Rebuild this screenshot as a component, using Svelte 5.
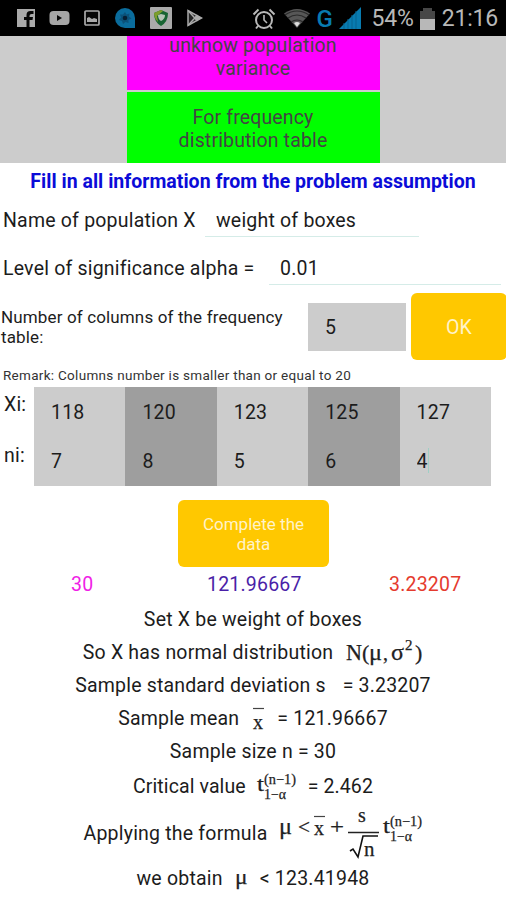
<script>
  let population = $state('weight of boxes');
  let alpha = $state('0.01');
  let columnCount = $state('5');

  let table = $state([
    { x: '118', n: '7' },
    { x: '120', n: '8' },
    { x: '123', n: '5' },
    { x: '125', n: '6' },
    { x: '127', n: '4' }
  ]);
</script>

{#snippet critical(x, y)}
  <text x={x} y={y} class="sym" textLength="7" lengthAdjust="spacingAndGlyphs" font-size="22">t</text>
  <text x={x + 7} y={y - 7} class="sym" textLength="32" lengthAdjust="spacingAndGlyphs" font-size="14.500">(n−1)</text>
  <text x={x + 7} y={y + 8} class="sym" textLength="22" lengthAdjust="spacingAndGlyphs" font-size="14">1−α</text>
{/snippet}

<div class="screen">
  <header class="status">
    <div class="notifications">
      <svg width="18" height="18" viewBox="0 0 18 18">
        <rect width="18" height="18" fill="#aaa" />
        <path d="M9.500 18v-7H7V8h2.500V6q0-4 4-4h3v3h-2q-2 0-2 2v1h3.500l-.5 3h-3v7z" fill="#080808" />
      </svg>
      <svg width="21" height="16" viewBox="0 0 21 16">
        <rect x=".5" y="1" width="20" height="14" rx="4" fill="#a6a6a6" />
        <path d="M8 5v6l5-3z" fill="#080808" />
      </svg>
      <svg width="16" height="16" viewBox="0 0 16 16">
        <rect x="1" y="1" width="14" height="14" rx="1" fill="#080808" stroke="#aaa" stroke-width="1.700" />
        <path d="M3 12V8l2-1 3 2 2-1 3 1v3z" fill="#aaa" />
      </svg>
      <svg width="22" height="22" viewBox="0 0 22 22">
        <path d="M11 1a10 10 0 1 0 0 20h10V11A10 10 0 0 0 11 1z" fill="#0a6c9c" />
        <path d="M11 5l1.500 2.500 3-1-.5 3 2.500 2-3 1.500v3l-3-1-2.500 2-1-3-3-1 2-2.500L6 7.500l3 .1z" fill="#0b527a" />
        <circle cx="11" cy="11" r="2.300" fill="#062035" />
      </svg>
      <svg width="22" height="22" viewBox="0 0 22 22">
        <rect width="22" height="22" rx="1" fill="#aaa" />
        <path d="M4 6l7-3 7 3q0 9-7 13Q4 15 4 6z" fill="#176432" />
        <path d="M4 6l7-3 2 1-6 5 1 6Q4 11 4 6z" fill="#7d9d2b" />
        <path d="M8 8l3-1 4 1q0 4-4 6-3-2-3-6z" fill="#b5c3b5" />
      </svg>
      <svg width="18" height="20" viewBox="0 0 18 20">
        <path d="M2 2.500v15L15.500 10z" fill="#242424" stroke="#aaa" stroke-width="1.500" />
        <path d="M2 2.500L11.500 13M2 17.500L11.500 7" fill="none" stroke="#aaa" stroke-width="1.500" />
        <path d="M11 7l5 3-5 3-3-3z" fill="#aaa" />
      </svg>
    </div>
    <div class="system">
      <svg width="24" height="22" viewBox="0 0 24 22" fill="none" stroke="#b8b8b8">
        <circle cx="12" cy="12" r="8" stroke-width="2" />
        <path d="M12 7v5l3 3" stroke-width="1.600" />
        <path d="M1.500 6.500l5-5M17.500 1.500l5 5M6 18l-2 2.500M18 18l2 2.500" stroke-width="2" />
      </svg>
      <svg class="wifi" width="28" height="21" viewBox="0 0 28 21">
        <path d="M1 5.500Q14-3.500 27 5.500L14 20z" fill="#575757" />
        <path d="M2 7q12-8 24 0M5 10q9-6 18 0M8 14q6-4 12 0" fill="none" stroke="#2a2a2a" stroke-width="1.200" />
        <path d="M11 15q3-2 6 0l-3 4z" fill="#ddd" />
      </svg>
      <span class="network">G</span>
      <svg width="24" height="23" viewBox="0 0 24 23">
        <path d="M1 22L23 0v22z" fill="#087bb0" />
        <path d="M6 16v6M10 12v10M14 8v14M18 4v18" stroke="#066490" stroke-width="1" />
      </svg>
      <span class="percent">54%</span>
      <svg class="battery" width="15" height="22" viewBox="0 0 15 22">
        <path d="M0 3h3V0h9v3h3v9H0z" fill="#474747" />
        <path d="M0 11h15v11H0z" fill="#b8b8b8" />
      </svg>
      <span class="clock">21:16</span>
    </div>
  </header>

  <nav class="modes">
    <button type="button" class="mode variance">unknow population<br />variance</button>
    <button type="button" class="mode frequency">For frequency<br />distribution table</button>
  </nav>

  <h1>Fill in all information from the problem assumption</h1>

  <label class="field name">
    <span>Name of population X</span>
    <input bind:value={population} />
  </label>
  <label class="field alpha">
    <span>Level of significance alpha =</span>
    <input bind:value={alpha} />
  </label>

  <div class="columns">
    <span class="columns-label">Number of columns of the frequency table:</span>
    <input bind:value={columnCount} />
    <button type="button" class="ok">OK</button>
  </div>

  <p class="remark">Remark: Columns number is smaller than or equal to 20</p>

  <div class="data">
    <div class="data-labels">
      <span>Xi:</span>
      <span>ni:</span>
    </div>
    {#each table as col, i}
      <div class="data-col">
        <input bind:value={col.x} />
        <input bind:value={col.n} />
        {#if i === table.length - 1}
          <i class="caret"></i>
        {/if}
      </div>
    {/each}
  </div>

  <button type="button" class="complete">Complete the<br />data</button>

  <div class="stats">
    <span class="size">30</span>
    <span class="mean">121.96667</span>
    <span class="deviation">3.23207</span>
  </div>

  <section class="results">
    <div class="line"><span>Set X be weight of boxes</span></div>
    <div class="line">
      <span>So X has normal distribution</span>
      <svg width="78" height="32" viewBox="0 -1 78 32">
        <text x="1" y="22" class="sym" font-size="23" textLength="16" lengthAdjust="spacingAndGlyphs">N</text>
        <text x="17" y="22" class="sym" font-size="22">(</text>
        <text x="24" y="22" class="sym" font-size="23" textLength="13" lengthAdjust="spacingAndGlyphs">μ</text>
        <text x="38" y="22" class="sym" font-size="20">,</text>
        <text x="46" y="22" class="sym" font-size="23" textLength="13" lengthAdjust="spacingAndGlyphs">σ</text>
        <text x="60" y="12" class="sym" font-size="15">2</text>
        <text x="70" y="22" class="sym" font-size="22">)</text>
      </svg>
    </div>
    <div class="line deviation-line">
      <span>Sample standard deviation s</span>
      <span>= 3.23207</span>
    </div>
    <div class="line mean-line">
      <span>Sample mean</span>
      <svg width="14" height="30" viewBox="0 0 14 30">
        <path d="M2 4.500h11" stroke="#444" stroke-width="1.200" />
        <text x="2" y="25" class="sym" font-size="20" textLength="10" lengthAdjust="spacingAndGlyphs">x</text>
      </svg>
      <span>= 121.96667</span>
    </div>
    <div class="line"><span>Sample size n = 30</span></div>
    <div class="line critical-line">
      <span>Critical value</span>
      <svg width="40" height="36" viewBox="0 0 40 36">
        {@render critical(0, 22)}
      </svg>
      <span>= 2.462</span>
    </div>
    <div class="line formula-line">
      <span>Applying the formula</span>
      <svg width="143" height="60" viewBox="0 -2 143 60">
        <text x="0" y="29" class="sym" font-size="23" textLength="13" lengthAdjust="spacingAndGlyphs">μ</text>
        <text x="19" y="29" class="sym" font-size="22" textLength="12" lengthAdjust="spacingAndGlyphs">&lt;</text>
        <path d="M35 11.500h11" stroke="#444" stroke-width="1.200" />
        <text x="35" y="30" class="sym" font-size="21" textLength="10" lengthAdjust="spacingAndGlyphs">x</text>
        <text x="51" y="29" class="sym" font-size="22" textLength="14" lengthAdjust="spacingAndGlyphs">+</text>
        <text x="79" y="17" class="sym" font-size="20">s</text>
        <path d="M69 27.500h31" stroke="#222" stroke-width="1.500" />
        <path d="M71 46l3-2 5 8 5-21h15" fill="none" stroke="#111" stroke-width="1.600" />
        <text x="85" y="51" class="sym" font-size="21">n</text>
        {@render critical(104, 28)}
      </svg>
    </div>
    <div class="line obtain-line">
      <span>we obtain</span>
      <svg width="13" height="30" viewBox="0 -2 13 30">
        <text x="0" y="18" class="sym" font-size="22" textLength="12.500" lengthAdjust="spacingAndGlyphs">μ</text>
      </svg>
      <span>&lt; 123.41948</span>
    </div>
  </section>
</div>

<style>
  :global(body) {
    background: #fff;
    overflow: hidden;
  }

  .screen {
    width: 506px;
    height: 900px;
    overflow: hidden;
    background: #fff;
    color: #1c1c1c;
    font-family: Roboto, sans-serif;
    font-size: 19.5px;
    letter-spacing: 0.2px;
  }

  button, input {
    font: inherit;
    letter-spacing: inherit;
    color: inherit;
    border: none;
    border-radius: 0;
    margin: 0;
    padding: 0;
    min-width: 0;
    box-sizing: border-box;
    outline: none;
  }

  svg { display: block; flex: none; overflow: visible; }

  /* status bar */
  .status {
    display: flex;
    justify-content: space-between;
    height: 36px;
    background: #000;
    color: #b8b8b8;
  }
  .notifications, .system {
    display: flex;
    align-items: center;
  }
  .notifications { gap: 14px; padding-left: 17px; }
  .system { padding: 1px 8px 0 0; font-size: 23px; letter-spacing: -0.2px; }
  .wifi { margin-left: 7px; }
  .network { margin: 0 5px; color: #087bb0; font-weight: 500; font-size: 24px; }
  .percent { margin-left: 10px; }
  .battery { margin: 0 7px 0 6px; }

  /* test type buttons, scrolled partly under the status bar */
  .modes {
    display: flex;
    flex-direction: column;
    align-items: center;
    justify-content: flex-end;
    gap: 2px;
    height: 127px;
    overflow: hidden;
    background: #ccc;
  }
  .mode {
    width: 253px;
    height: 71px;
    flex: none;
    line-height: 23px;
    color: #444;
    letter-spacing: 0.15px;
  }
  .variance { padding-top: 4px; background: #f0f; }
  .frequency { padding-top: 2px; background: #0f0; }

  h1 {
    margin: 0;
    height: 36px;
    line-height: 37px;
    text-align: center;
    font-size: 19.5px;
    font-weight: 700;
    color: #0b0bd8;
    letter-spacing: 0.02px;
  }

  .field {
    display: flex;
    height: 38px;
    margin-bottom: 10px;
    padding-left: 3px;
    line-height: 44px;
  }
  .field span { white-space: nowrap; }
  .field input {
    height: 38px;
    padding: 6px 11px 0;
    background: transparent;
    border-bottom: 1px solid #d5ece8;
  }
  .name span { width: 202px; }
  .name input { width: 214px; }
  .alpha span { width: 266px; }
  .alpha input { width: 232px; }

  .columns {
    display: flex;
    align-items: center;
    height: 67px;
    margin-top: -2px;
  }
  .columns-label {
    width: 308px;
    flex: none;
    padding-left: 1px;
    box-sizing: border-box;
    font-size: 17px;
    line-height: 20px;
    letter-spacing: 0.14px;
  }
  .columns input {
    width: 98px;
    flex: none;
    height: 48px;
    padding: 2px 17px 0;
    background: #ccc;
  }
  .ok, .complete {
    background: #ffc800;
    border-radius: 6px;
    color: #fff3c8;
  }
  .ok { width: 96px; flex: none; height: 67px; margin-left: 5px; padding-top: 2px; }

  .remark {
    margin: 0;
    height: 27px;
    padding-left: 3px;
    line-height: 31px;
    font-size: 13.5px;
    letter-spacing: 0.29px;
    white-space: nowrap;
    color: #333;
  }

  /* frequency table */
  .data {
    display: grid;
    grid-template-columns: 34px repeat(5, 91.4px);
    height: 99px;
  }
  .data-labels {
    display: grid;
    grid-template-rows: 51px 48px;
    padding-left: 4px;
    line-height: 36px;
  }
  .data-col {
    position: relative;
    display: grid;
    grid-template-rows: 50px 49px;
    background: #ccc;
  }
  .data-col:nth-child(odd) { background: #9e9e9e; }
  .data-col input {
    width: 100%;
    padding-left: 17px;
    background: transparent;
  }
  .caret {
    position: absolute;
    left: 28px;
    top: 61px;
    width: 1px;
    height: 25px;
    background: #9fcfc6;
  }

  .complete {
    display: block;
    width: 151px;
    height: 67px;
    margin: 14px 0 0 178px;
    padding-top: 1px;
    font-size: 17px;
    line-height: 20px;
    letter-spacing: 0;
  }

  .stats {
    display: flex;
    height: 36px;
    line-height: 35px;
    padding-left: 71px;
  }
  .size { width: 136px; color: #f01ee6; }
  .mean { width: 182px; color: #4a1fa8; }
  .deviation { color: #e53b2e; }

  .results { color: #1c1c1c; }
  .line {
    display: flex;
    justify-content: center;
    align-items: center;
    gap: 12px;
    height: 33px;
    white-space: nowrap;
  }
  .deviation-line { gap: 17px; letter-spacing: 0.17px; }
  .critical-line { height: 37px; gap: 11px; letter-spacing: 0.1px; }
  .formula-line { height: 56px; }
  .obtain-line { height: 35px; }

  .sym {
    font-family: "Liberation Serif", serif;
    fill: #222;
    stroke: #222;
    stroke-width: 0.25px;
    letter-spacing: 0;
  }
</style>
